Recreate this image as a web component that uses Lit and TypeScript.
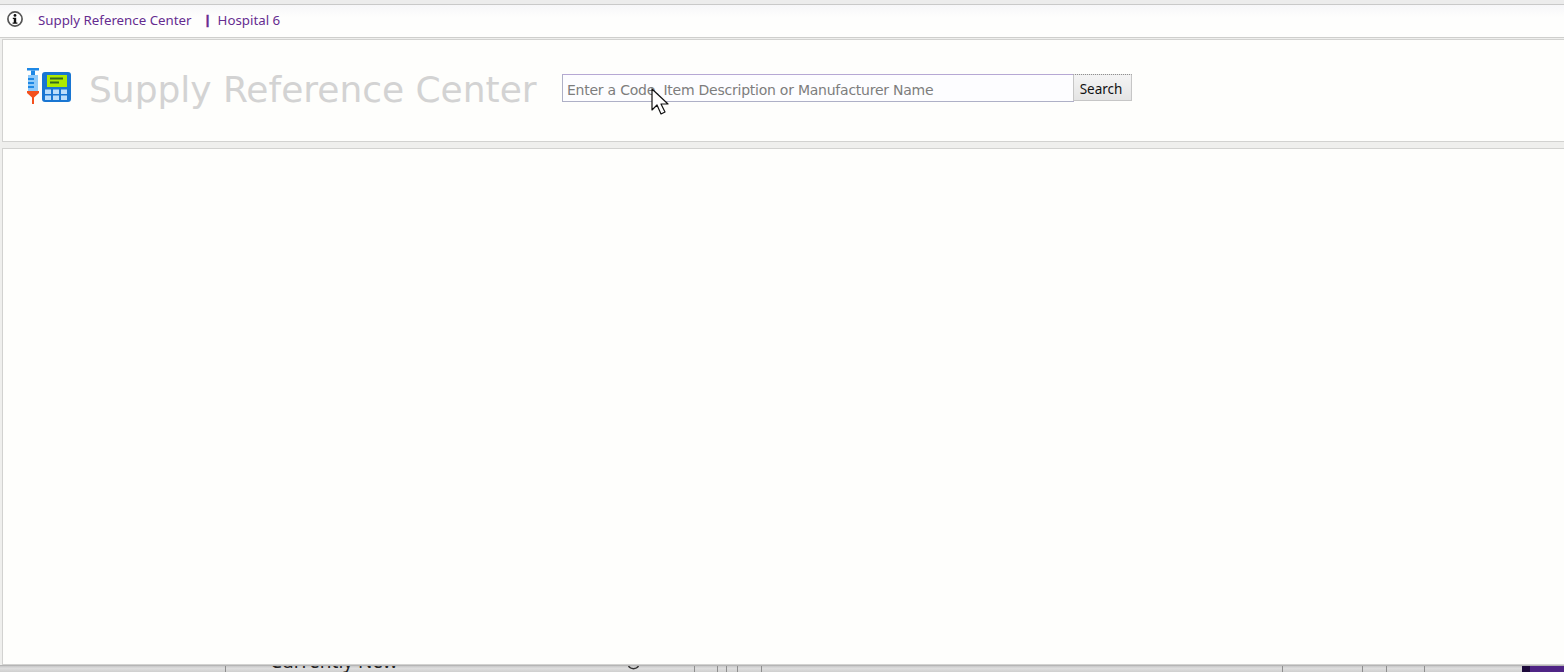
import { LitElement, html, css } from "lit";
import { customElement } from "lit/decorators.js";

@customElement("app-root")
export class AppRoot extends LitElement {
  static styles = css`
    :host { display: block; width: 1564px; height: 672px; overflow: hidden; position: relative; background: #efefed; font-family: "DejaVu Sans", sans-serif; }
    .page { display: flex; flex-direction: column; height: 672px; }
    .strip { height: 4px; background: #ececec; border-bottom: 1px solid #c9c9c9; flex: none; }
    .top { flex: none; box-sizing: border-box; display: flex; align-items: center; background: linear-gradient(#f7f7f9, #fefefd 40%); padding: 0 0 2px 7px; color: #652c90; font: 13.3px "Noto Sans", sans-serif; border-bottom: 1px solid #cfcfcd; height: 33px; }
    .info { width: 16px; height: 16px; margin: -3px 15px 0 0; flex: none; }
    .sep { margin-left: 13px; width: 13px; flex: none; font-weight: 900; font-size: 12px; line-height: 12px; -webkit-text-stroke: .5px #652c90; }
    .panel { background: #fefefc; border: 1px solid #d2d2d0; border-right: none; margin-left: 2px; box-sizing: border-box; }
    .head { margin-top: 1px; height: 103px; flex: none; display: flex; align-items: center; padding: 0 0 4px 24px; }
    .logo { width: 44px; height: 36px; flex: none; margin: -5px 18px 0 0; }
    h1 { margin: 2px 26px 0 0; font: 400 36px "DejaVu Sans", sans-serif; color: #d3d3d3; white-space: nowrap; width: 447px; letter-spacing: -.02px; }
    .search { display: flex; align-items: flex-start; height: 28px; margin-top: -2px; }
    .input { width: 512px; height: 28px; box-sizing: border-box; border: 1px solid #b6a8d4; border-bottom-color: #aeb0c6; border-left-color: #aeb0c6; background: #fdfdff; color: #7d7d7d; font: 14px "DejaVu Sans", sans-serif; padding: 4px 0 0 4px; display: flex; align-items: center; white-space: nowrap; overflow: hidden; letter-spacing: -.24px; }
    .btn { width: 59px; height: 27px; margin-left: -1px; box-sizing: border-box; border: 1px solid #c6c6c6; border-top: 1px dotted #8f8f8f; background: linear-gradient(#f4f4f4, #e4e4e4); color: #111; font: 13.5px "Noto Sans", sans-serif; display: flex; align-items: center; justify-content: center; padding: 3px 3px 0 0; }
    .main { margin-top: 6px; flex: 1; min-height: 0; }
    .foot { height: 7px; flex: none; background: linear-gradient(#c8c8c8, #dedede 40%, #cfcfcf); border-top: 1px solid #b5b5b5; display: flex; overflow: hidden; position: relative; font: 19px "Noto Sans", sans-serif; color: #222; box-sizing: border-box; }
    .cell { border-right: 1px solid #8e8e8e; height: 100%; flex: none; box-sizing: border-box; }
    .cur { position: absolute; left: 270px; top: -18px; white-space: nowrap; }
    .chev { position: absolute; left: 628px; top: 0; width: 11px; height: 4px; }
    .tile { position: absolute; right: 0; top: 0; bottom: 0; width: 42px; background: linear-gradient(90deg, #1e0a3c 8px, #4f2585 8px); }
    .cursor { position: absolute; left: 651px; top: 88px; width: 19px; height: 29px; }
  `;

  render() {
    return html`
      <div class="page">
        <div class="strip"></div>
        <div class="top">
          <svg class="info" viewBox="0 0 16 16">
            <circle cx="8" cy="8" r="7.100" fill="#fff" stroke="#555" stroke-width="1.700"/>
            <circle cx="8" cy="4.400" r="1.400" fill="#111"/>
            <path d="M5.800 6.800h3.400v4.700h1.200v1.300H5.600v-1.300h1.200V8h-1z" fill="#111"/>
          </svg>
          <span>Supply Reference Center</span><span class="sep">|</span><span>Hospital 6</span>
        </div>
        <div class="panel head">
          <svg class="logo" viewBox="0 0 44 36">
            <rect x="0" y="0" width="12" height="2.500" fill="#1e88e5"/>
            <rect x="4" y="2.500" width="4" height="4.500" fill="#1e88e5"/>
            <rect x="1" y="7" width="10" height="16.500" fill="#90caf9"/>
            <path d="M1 10h6v2H1zM1 14h6v2H1zM1 18h6v2H1z" fill="#1e88e5"/>
            <path d="M0 23h12v2l-5 4.500V36H5v-6.500L0 25z" fill="#f4511e"/>
            <rect x="15" y="4" width="29" height="30" rx="3" fill="#1976d2"/>
            <rect x="20" y="7" width="20" height="12" fill="#aeea00"/>
            <path d="M23 9.500h13v2H23zM23 13.500h9v2h-9z" fill="#33691e"/>
            <path d="M18 21.500h6v4.500h-6zM26 21.500h6v4.500h-6zM34 21.500h6v4.500h-6zM18 27.500h6v4.500h-6zM26 27.500h6v4.500h-6zM34 27.500h6v4.500h-6z" fill="#bbdefb"/>
          </svg>
          <h1>Supply Reference Center</h1>
          <div class="search">
            <div class="input">Enter a Code, Item Description or Manufacturer Name</div>
            <div class="btn">Search</div>
          </div>
        </div>
        <div class="panel main"></div>
        <div class="foot">
          <div class="cell" style="width:226px"></div>
          <div class="cell" style="width:469px"></div>
          <div class="cell" style="width:23px"></div>
          <div class="cell" style="width:9px"></div>
          <div class="cell" style="width:11px"></div>
          <div class="cell" style="width:24px"></div>
          <div class="cell" style="width:521px"></div>
          <div class="cell" style="width:80px"></div>
          <div class="cell" style="width:24px"></div>
          <div class="cell" style="width:38px"></div>
          <div class="cur">Currently New</div>
          <svg class="chev" viewBox="0 0 11 4"><path d="M.500 0c2 3.500 8 3.500 10 0" fill="none" stroke="#333" stroke-width="1.500"/></svg>
          <div class="tile"></div>
        </div>
      </div>
      <svg class="cursor" viewBox="0 0 19 29">
        <path d="M1 1v21l5-5 4 9 4-2-4-8h7z" fill="#fff" stroke="#111" stroke-width="1.200" stroke-linejoin="round"/>
      </svg>
    `;
  }
}
